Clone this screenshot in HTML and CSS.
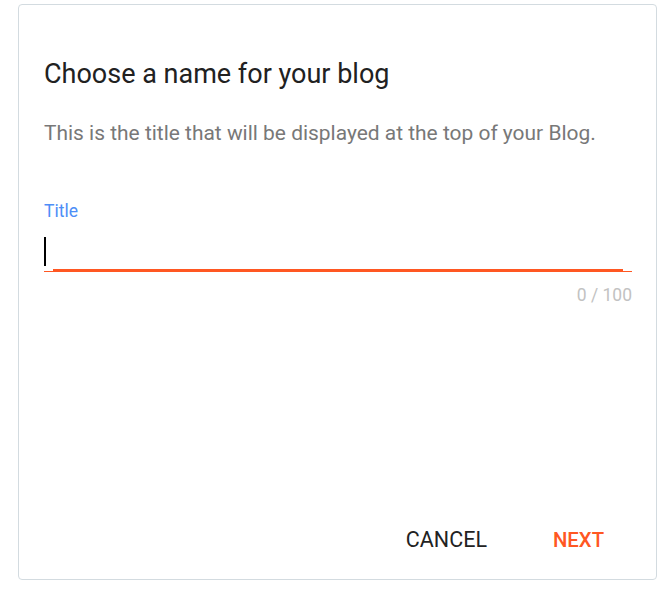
FILE: index.html
```html
<!DOCTYPE html>
<html>
<head>
<meta charset="utf-8">
<link rel="stylesheet" href="styles.css">
</head>
<body>
<div class="card">
  <div class="content">
    <h1 class="title">Choose a name for your blog</h1>
    <p class="desc">This is the title that will be displayed at the top of your Blog.</p>
    <div class="field">
      <label class="label">Title</label>
      <div class="input-wrap">
        <span class="caret"></span>
        <span class="line"></span>
        <span class="line-active"></span>
      </div>
      <div class="counter">0 / 100</div>
    </div>
  </div>
  <div class="actions">
    <button class="btn btn-cancel">CANCEL</button>
    <button class="btn btn-next">NEXT</button>
  </div>
</div>
</body>
</html>
```
FILE: styles.css
```css
html, body {
  margin: 0;
  padding: 0;
  background: #fff;
}
body {
  font-family: Roboto, "Liberation Sans", sans-serif;
}
.card {
  box-sizing: border-box;
  margin: 4px 0 0 18px;
  width: 639px;
  height: 576px;
  border: 1px solid #d3dbe0;
  border-radius: 4px;
  display: flex;
  flex-direction: column;
  justify-content: space-between;
}
.content {
  padding: 53px 24px 0 25px;
}
.title {
  margin: 0;
  font-size: 27px;
  line-height: 32px;
  font-weight: 400;
  color: #212121;
}
.desc {
  margin: 31px 0 0;
  font-size: 20.95px;
  line-height: 24px;
  color: #787878;
}
.field {
  margin-top: 56px;
}
.label {
  display: block;
  font-size: 17.5px;
  line-height: 20px;
  color: #4d8ef7;
}
.input-wrap {
  position: relative;
  height: 51px;
}
.caret {
  position: absolute;
  left: 0;
  top: 16px;
  width: 2px;
  height: 29px;
  background: #000;
}
.line {
  position: absolute;
  left: 0;
  right: 0;
  bottom: 0;
  height: 1px;
  background: #ff5722;
}
.line-active {
  position: absolute;
  left: 9px;
  right: 9px;
  bottom: 0;
  height: 3px;
  background: #ff5722;
}
.counter {
  margin-top: 13px;
  text-align: right;
  font-size: 17.5px;
  line-height: 20px;
  color: #c2c2c2;
}
.actions {
  display: flex;
  justify-content: flex-end;
  gap: 19px;
  padding: 0 28px 19px 0;
}
.btn {
  border: 0;
  background: none;
  font-family: Roboto, "Liberation Sans", sans-serif;
  font-size: 21px;
  font-weight: 500;
  padding: 8px 24px;
  line-height: 24px;
  cursor: pointer;
}
.btn-cancel {
  color: #222;
  font-weight: 400;
  font-size: 21.5px;
  margin-right: -1px;
}
.btn-next {
  color: #ff5722;
  font-size: 20.3px;
}
```
